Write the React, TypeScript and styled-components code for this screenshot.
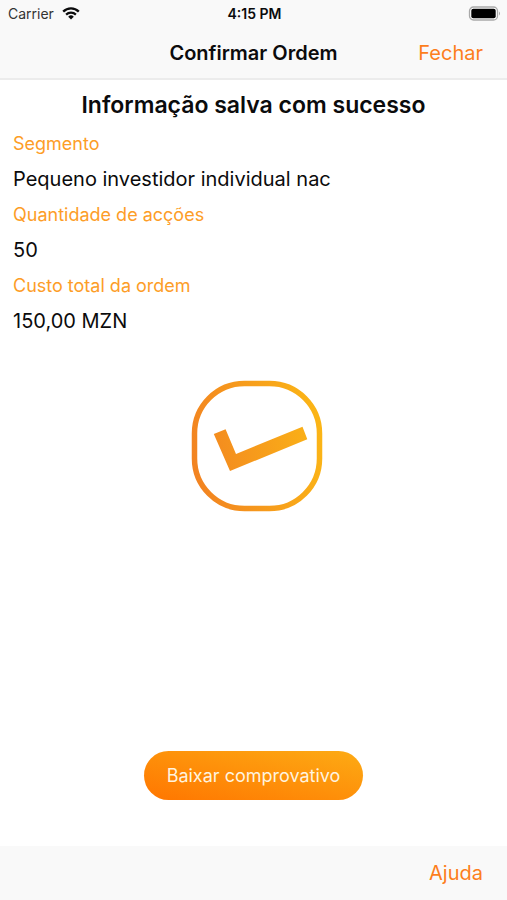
import React from "react";
import styled, { createGlobalStyle } from "styled-components";

const GlobalStyle = createGlobalStyle`
  * {
    box-sizing: border-box;
  }

  body {
    margin: 0;
    background: #ffffff;
    color: #0b0b0c;
    font-family: Inter, "Liberation Sans", sans-serif;
  }

  button {
    border: 0;
    padding: 0;
    background: none;
    font: inherit;
    cursor: pointer;
  }
`;

const Screen = styled.div`
  display: flex;
  flex-direction: column;
  min-height: 100vh;
`;

const Header = styled.header`
  background: #f9f9f9;
  border-bottom: 2px solid #ececec;
`;

const StatusBar = styled.div`
  display: grid;
  grid-template-columns: 1fr auto 1fr;
  align-items: center;
  height: 27px;
  padding: 0 6px 0 8px;
  font-size: 14px;
  line-height: 20px;
`;

const Carrier = styled.span`
  display: flex;
  align-items: center;
  gap: 8px;
  color: #333333;
`;

const Clock = styled.time`
  font-weight: 600;
`;

const BatteryIcon = styled.svg`
  justify-self: end;
`;

const NavBar = styled.nav`
  display: grid;
  grid-template-columns: 1fr auto 1fr;
  align-items: center;
  height: 51px;
  padding: 0 24px;
`;

const NavTitle = styled.h1`
  grid-column: 2;
  margin: 0;
  font-size: 20px;
  line-height: 28px;
  font-weight: 600;
`;

const TextButton = styled.button`
  && {
    justify-self: end;
    color: #fd7e1c;
    font-size: 20px;
    line-height: 28px;
  }
`;

const Content = styled.main`
  display: flex;
  flex: 1;
  flex-direction: column;
  padding: 9px 13px 46px;
`;

const Message = styled.h2`
  margin: 0 0 7px;
  font-size: 23px;
  line-height: 32px;
  font-weight: 600;
  text-align: center;
`;

const Details = styled.dl`
  margin: 0;
`;

const Label = styled.dt`
  color: #fd9d27;
  font-size: 18px;
  line-height: 32px;
`;

const Value = styled.dd`
  margin: 0;
  font-size: 20px;
  line-height: 39px;
`;

const SuccessIcon = styled.svg`
  align-self: center;
  margin-top: 29px;
`;

const DownloadButton = styled.button`
  && {
    align-self: center;
    margin-top: auto;
    padding: 0 23px;
    border-radius: 25px;
    background: linear-gradient(to top right, #ff7600, #fdab14);
    color: #fff3df;
    font-size: 18px;
    line-height: 49px;
  }
`;

const Footer = styled.footer`
  display: flex;
  align-items: center;
  justify-content: flex-end;
  height: 54px;
  padding: 0 24px;
  background: #f9f9f9;
`;

const details = [
  { label: "Segmento", value: "Pequeno investidor individual nac" },
  { label: "Quantidade de acções", value: "50" },
  { label: "Custo total da ordem", value: "150,00 MZN" },
];

function Wifi() {
  return (
    <svg width="18" height="13" viewBox="0 0 18 13" fill="none" stroke="#0b0b0c" aria-hidden="true">
      <path d="M1.2 4.6a11 11 0 0 1 15.6 0" strokeWidth="2.3" />
      <path d="M4.1 7.6a7 7 0 0 1 9.8 0" strokeWidth="2.2" />
      <path d="M9 12.4 6.2 9.7a4 4 0 0 1 5.6 0Z" fill="#0b0b0c" stroke="none" />
    </svg>
  );
}

function Battery() {
  return (
    <BatteryIcon width="33" height="15" viewBox="0 0 33 15" role="img" aria-label="Bateria">
      <rect x="1.5" y="1" width="28" height="13" rx="4" fill="#ffffff" stroke="#a9a9a9" strokeWidth="1.3" />
      <rect x="3.3" y="2.8" width="24.4" height="9.4" rx="2" fill="#000000" />
      <path d="M31 5.5q2 2 0 4Z" fill="#a9a9a9" />
    </BatteryIcon>
  );
}

function Success() {
  return (
    <SuccessIcon width="147" height="154" viewBox="0 0 147 154" role="img" aria-label="Sucesso">
      <defs>
        <linearGradient id="success" gradientUnits="userSpaceOnUse" x1="12" y1="90" x2="142" y2="64">
          <stop offset="0" stopColor="#f28321" />
          <stop offset="1" stopColor="#fbb516" />
        </linearGradient>
      </defs>
      <rect x="14.5" y="13.5" width="125" height="125" rx="50" fill="none" stroke="url(#success)" strokeWidth="5.5" />
      <path d="m33.8 64 11.8-4.7L56 84l66.5-27.3 4.8 12.6L50 101Z" fill="url(#success)" />
    </SuccessIcon>
  );
}

export default function App() {
  return (
    <Screen>
      <GlobalStyle />
      <Header>
        <StatusBar>
          <Carrier>
            Carrier
            <Wifi />
          </Carrier>
          <Clock>4:15 PM</Clock>
          <Battery />
        </StatusBar>
        <NavBar>
          <NavTitle>Confirmar Ordem</NavTitle>
          <TextButton type="button">Fechar</TextButton>
        </NavBar>
      </Header>
      <Content>
        <Message>Informação salva com sucesso</Message>
        <Details>
          {details.map(({ label, value }) => (
            <React.Fragment key={label}>
              <Label>{label}</Label>
              <Value>{value}</Value>
            </React.Fragment>
          ))}
        </Details>
        <Success />
        <DownloadButton type="button">Baixar comprovativo</DownloadButton>
      </Content>
      <Footer>
        <TextButton type="button">Ajuda</TextButton>
      </Footer>
    </Screen>
  );
}
